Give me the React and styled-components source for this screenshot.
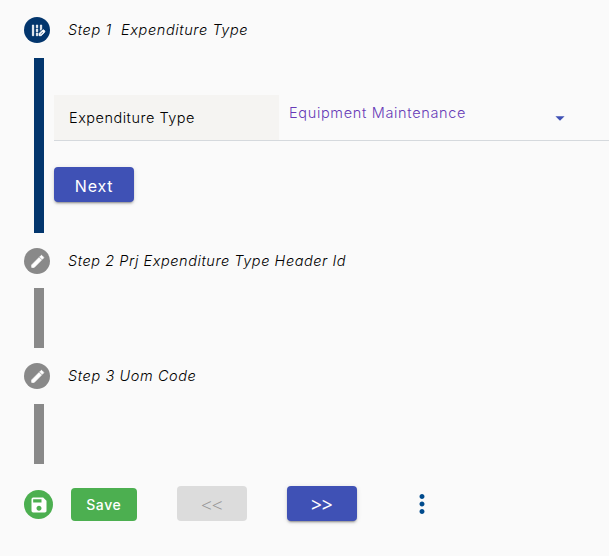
import React from 'react';
import styled, { createGlobalStyle } from 'styled-components';
import { MdEdit, MdEditRoad, MdSave, MdMoreVert, MdArrowDropDown } from 'react-icons/md';

const GlobalStyle = createGlobalStyle`
  *, *::before, *::after { box-sizing: border-box; }
  body {
    margin: 0;
    background: #fafafa;
    font-family: Inter, 'Liberation Sans', sans-serif;
    overflow: hidden;
  }
`;

const Page = styled.main`
  width: 609px;
  height: 556px;
  padding-top: 17px;
  background: #fafafa;
  color: #000;
  overflow: hidden;
`;

const Step = styled.section`
  margin-bottom: 14.7px;
`;

const StepHeader = styled.header`
  display: flex;
  align-items: center;
  height: 26px;
  margin: 0 0 14.9px 24px;
`;

const StepBadge = styled.span`
  display: flex;
  align-items: center;
  justify-content: center;
  width: 26px;
  height: 26px;
  border-radius: 50%;
  background: ${(p) => (p.$active ? '#03366d' : '#898989')};
  color: #fff;
  font-size: 16px;

  svg {
    transform: translate(0.7px, 0.4px);
  }

  path:not([fill='none']) {
    stroke: currentColor;
    stroke-width: 1.1px;
  }

  path[fill='none'] {
    stroke: none;
  }
`;

const StepTitle = styled.h2`
  margin: 0 0 0 18px;
  font-size: 14.5px;
  line-height: 20px;
  font-weight: 300;
  font-style: italic;
  letter-spacing: ${(p) => p.$tracking};
  white-space: pre;
`;

const StepBody = styled.div`
  height: ${(p) => p.$height};
  margin-left: 34px;
  padding-left: 10px;
  border-left: 10px solid ${(p) => (p.$active ? '#03366d' : '#898989')};
`;

const FormArea = styled.div`
  padding-top: 37px;
`;

const FieldRow = styled.div`
  display: grid;
  grid-template-columns: 225px 1fr;
  height: 46px;
  border-bottom: 1px solid #d5d9dd;
`;

const FieldLabel = styled.label`
  padding: 13px 0 0 15px;
  background: #f5f4f2;
  font-size: 14.5px;
  line-height: 20px;
  font-weight: 300;
  letter-spacing: 0.5px;
`;

const Select = styled.div`
  display: flex;
  justify-content: space-between;
  padding: 8px 37px 0 10px;
  color: #673ab7;
  font-size: 14.5px;
  font-weight: 300;
  line-height: 20px;
  letter-spacing: 0.67px;

  svg {
    width: 22px;
    height: 22px;
    margin: 4px 1px 0 0;
    color: #3f51b5;
  }
`;

const Button = styled.button`
  width: ${(p) => p.$width};
  height: ${(p) => p.$height || '35px'};
  padding: 0;
  border: 0;
  border-radius: 4px;
  background: #3f51b5;
  color: #fff;
  font-family: inherit;
  font-size: 16px;
  font-weight: 400;
  letter-spacing: 0.8px;
  box-shadow: 0 3px 1px -2px rgba(0, 0, 0, 0.2), 0 2px 2px rgba(0, 0, 0, 0.14),
    0 1px 5px rgba(0, 0, 0, 0.12);
`;

const NextButton = styled(Button)`
  display: block;
  margin: 26.6px 0 0 -0.4px;
  padding: 2px 0 0 1px;
`;

const SaveButton = styled(Button)`
  margin: 0 40px 0 17.8px;
  padding-top: 1px;
  background: #4caf50;
  font-size: 14px;
  font-weight: 500;
  letter-spacing: 0.6px;
  box-shadow: none;
`;

const PagerButton = styled(Button)`
  margin-top: -1px;
  padding-top: 1px;
  font-family: 'Noto Sans', sans-serif;
  font-size: 19px;
  letter-spacing: 0;
  line-height: 36px;

  &:disabled {
    margin-right: 40px;
    background: #dcdcdc;
    color: #969696;
    font-weight: 300;
    box-shadow: none;
  }
`;

const Actions = styled.footer`
  display: flex;
  align-items: center;
  height: 35px;
  margin: 22.9px 0 0 24px;
`;

const SaveBadge = styled.span`
  display: flex;
  align-items: center;
  justify-content: center;
  width: 29px;
  height: 29px;
  margin-top: 1px;
  border-radius: 50%;
  background: #4caf50;
  color: #fff;
  font-size: 20px;
`;

const MenuButton = styled.button`
  display: flex;
  margin-left: 50px;
  padding: 0;
  border: 0;
  background: none;
  color: #004b8d;
  font-size: 30px;
`;

export default function App() {
  return (
    <>
      <GlobalStyle />
      <Page>
        <Step>
          <StepHeader>
            <StepBadge $active><MdEditRoad /></StepBadge>
            <StepTitle $tracking="0.6px">{'Step 1  Expenditure Type'}</StepTitle>
          </StepHeader>
          <StepBody $active $height="175px">
            <FormArea>
              <FieldRow>
                <FieldLabel>Expenditure Type</FieldLabel>
                <Select>
                  <span>Equipment Maintenance</span>
                  <MdArrowDropDown />
                </Select>
              </FieldRow>
              <NextButton $width="80px">Next</NextButton>
            </FormArea>
          </StepBody>
        </Step>
        <Step>
          <StepHeader>
            <StepBadge><MdEdit /></StepBadge>
            <StepTitle $tracking="0.56px">Step 2 Prj Expenditure Type Header Id</StepTitle>
          </StepHeader>
          <StepBody $height="59.7px" />
        </Step>
        <Step>
          <StepHeader>
            <StepBadge><MdEdit /></StepBadge>
            <StepTitle $tracking="0.6px">Step 3 Uom Code</StepTitle>
          </StepHeader>
          <StepBody $height="60px" />
        </Step>
        <Actions>
          <SaveBadge><MdSave /></SaveBadge>
          <SaveButton $width="66px" $height="33px">Save</SaveButton>
          <PagerButton $width="70px" disabled>&lt;&lt;</PagerButton>
          <PagerButton $width="70px">&gt;&gt;</PagerButton>
          <MenuButton aria-label="More options"><MdMoreVert /></MenuButton>
        </Actions>
      </Page>
    </>
  );
}
